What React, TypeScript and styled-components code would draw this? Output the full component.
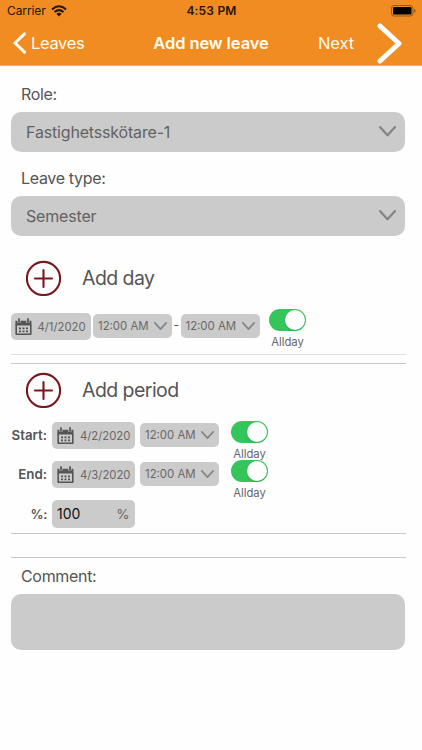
import React from 'react';
import styled, { createGlobalStyle } from 'styled-components';

const GlobalStyle = createGlobalStyle`
  * { box-sizing: border-box; }
  body { margin: 0; background: #fefefe; font-family: Inter, "Liberation Sans", sans-serif; color: #555; }
  svg { display: block; flex: none; }
  button, input, textarea { font-family: inherit; border: 0; padding: 0; margin: 0; outline: 0; }
`;

const Screen = styled.main`
  width: 422px;
  height: 750px;
  overflow: hidden;
  background: #fefefe;
`;

const Header = styled.header`
  height: 66px;
  background: #f18c23;
  border-bottom: 1px solid #f4ad63;
`;

const StatusBar = styled.div`
  height: 22px;
  display: grid;
  grid-template-columns: 1fr auto 1fr;
  align-items: center;
  padding: 0 6px 0 7px;
  color: #25160a;
  font-size: 12px;
  line-height: 22px;
`;

const Carrier = styled.div`
  display: flex;
  align-items: center;
  gap: 5px;
  letter-spacing: -0.1px;
`;

const Clock = styled.div`
  font-weight: 600;
  letter-spacing: 0.2px;
`;

const BatterySlot = styled.div`
  display: flex;
  justify-content: flex-end;
`;

const NavBar = styled.nav`
  height: 42px;
  display: grid;
  grid-template-columns: 1fr auto 1fr;
  align-items: center;
  padding: 0 20px 0 13px;
  color: #fffdf0;
`;

const NavLink = styled.button<{ $end?: boolean }>`
  display: flex;
  align-items: center;
  justify-content: ${p => (p.$end ? 'flex-end' : 'flex-start')};
  gap: ${p => (p.$end ? 23 : 4)}px;
  background: none;
  color: inherit;
  font-size: 16.5px;
  line-height: 20px;
  letter-spacing: ${p => (p.$end ? -0.1 : -0.35)}px;
`;

const NavTitle = styled.h1`
  margin: 0 0 0 7px;
  font-size: 16.5px;
  font-weight: 600;
  line-height: 20px;
  letter-spacing: -0.1px;
`;

const FieldLabel = styled.label<{ $top: number }>`
  display: block;
  margin: ${p => p.$top}px 0 8px 21px;
  height: 20px;
  font-size: 16px;
  line-height: 20px;
  letter-spacing: -0.32px;
`;

const Select = styled.button`
  display: flex;
  align-items: center;
  justify-content: space-between;
  width: 394.7px;
  height: 40px;
  margin-left: 10.5px;
  padding: 0 9.5px 1px 15.5px;
  border-radius: 10px;
  background: #cbcbcb;
  color: #626262;
  font-size: 16px;
  letter-spacing: -0.17px;
`;

const AddRow = styled.div<{ $top: number }>`
  display: flex;
  align-items: center;
  gap: 20px;
  height: 36px;
  margin: ${p => p.$top}px 0 0 25px;
  font-size: 19.5px;
  line-height: 24px;
  letter-spacing: -0.55px;
`;

const DayRow = styled.div`
  display: flex;
  align-items: flex-start;
  height: 44px;
  margin: 13px 16px 0 10.5px;
`;

const PeriodRow = styled.div`
  display: flex;
  align-items: flex-start;
  height: 39px;
`;

const PeriodForm = styled.div`
  margin: 13px 0 0;
  height: 112px;
`;

const RowLabel = styled.span`
  width: 47px;
  margin: 5px 5px 0 0;
  font-size: 13.3px;
  font-weight: 600;
  line-height: 19px;
  text-align: right;
`;

const PercentLabel = styled(RowLabel)`
  margin-top: 6px;
  font-size: 13px;
  letter-spacing: -0.3px;
`;

const DateBox = styled.button<{ $wide?: boolean; $top: number }>`
  display: flex;
  align-items: center;
  gap: 6px;
  width: ${p => (p.$wide ? 82.5 : 80.5)}px;
  height: 27px;
  margin-top: ${p => p.$top}px;
  padding-left: ${p => (p.$wide ? 5 : 4)}px;
  border-radius: 5px;
  background: #cbcbcb;
  color: #686868;
  font-size: 11.3px;
  letter-spacing: 0;
  white-space: nowrap;
`;

const TimeBox = styled.button<{ $left: number; $top: number }>`
  display: flex;
  align-items: center;
  justify-content: space-between;
  width: 79px;
  height: 24px;
  margin: ${p => p.$top}px 0 0 ${p => p.$left}px;
  padding: 0 5px 0 5px;
  border-radius: 5px;
  background: #cbcbcb;
  color: #686868;
  font-size: 11.4px;
  white-space: nowrap;
`;

const Dash = styled.span`
  width: 8.5px;
  margin-top: 8px;
  font-size: 12px;
  line-height: 16px;
  text-align: center;
`;

const ToggleGroup = styled.div<{ $left: number }>`
  display: flex;
  flex-direction: column;
  align-items: center;
  width: 37px;
  margin-left: ${p => p.$left}px;
  font-size: 11.3px;
  line-height: 14px;
  color: #666;
`;

const Track = styled.span`
  display: flex;
  justify-content: flex-end;
  flex: none;
  width: 37px;
  height: 22px;
  margin-bottom: 4px;
  padding: 1px;
  border-radius: 11px;
  background: #34c65a;
  position: relative;
`;

const Knob = styled.span`
  width: 20px;
  height: 20px;
  border-radius: 50%;
  background: #fff;
  box-shadow: 0 1px 2px rgba(0, 0, 0, 0.18);
`;

const PercentBox = styled.div`
  display: flex;
  align-items: center;
  justify-content: space-between;
  width: 82.5px;
  height: 28px;
  margin-top: 1px;
  padding: 0 5px;
  border-radius: 5px;
  background: #cbcbcb;
  color: #686868;
  font-size: 13.5px;
`;

const PercentInput = styled.input`
  width: 50px;
  background: transparent;
  color: #111;
  font-size: 14px;
  line-height: 18px;
`;

const Rule = styled.hr<{ $top?: number; $light?: boolean }>`
  height: 1px;
  margin: ${p => p.$top || 0}px 16.5px 0 10.5px;
  border: 0;
  background: ${p => (p.$light ? '#e0e0e0' : '#c8c8c8')};
`;

const Comment = styled.textarea`
  display: block;
  width: 394.7px;
  height: 56px;
  margin-left: 10.5px;
  padding: 10px 15px;
  border-radius: 10px;
  background: #cbcbcb;
  resize: none;
`;

const Chevron = ({ w, h, stroke, color = '#858585' }: { w: number; h: number; stroke: number; color?: string }) => (
  <svg width={w} height={h} viewBox={`0 0 ${w} ${h}`} fill="none" stroke={color} strokeWidth={stroke} strokeLinecap="round" strokeLinejoin="round">
    <path d={`M${stroke / 2} ${stroke / 2}L${w / 2} ${h - stroke / 2}L${w - stroke / 2} ${stroke / 2}`} />
  </svg>
);

const Wifi = () => (
  <svg width="16" height="12" viewBox="0 0 16 12" fill="none" stroke="#25160a" strokeWidth="2">
    <path d="M1 4.4Q8-1.8 15 4.4M3.5 7Q8 3.2 12.5 7" />
    <path d="M5.4 8.8Q8 6.8 10.6 8.8L8 11.5Z" fill="#25160a" stroke="none" />
  </svg>
);

const Battery = () => (
  <svg width="25" height="12" viewBox="0 0 25 12">
    <rect x="0.5" y="0.5" width="21.5" height="10.5" rx="2.8" fill="none" stroke="#8c5722" />
    <rect x="2" y="2" width="18.5" height="7.5" rx="1.3" fill="#000" />
    <path d="M23.3 4v3.8q1.2-.5 1.2-1.9T23.3 4" fill="#77491c" />
  </svg>
);

const PlusCircle = () => (
  <svg width="37" height="36" viewBox="0 0 37 36" fill="none" stroke="#78191f" strokeWidth="2.1" strokeLinecap="round">
    <circle cx="18.5" cy="18.5" r="16.6" />
    <path d="M18.5 10v17M10 18.5h17" />
  </svg>
);

const Calendar = () => (
  <svg width="17" height="18" viewBox="0 0 17 18" fill="none" stroke="#555">
    <path d="M1.2 6.5v9.7h14.6V6.5" strokeWidth="1.6" strokeLinejoin="round" />
    <path d="M.4 2.8h2v2h3.1v-2h5.8v2h3.1v-2h2v4.8H.4Z" fill="#555" stroke="none" />
    <path d="M4 .9v3M13 .9v3" strokeWidth="1.7" strokeLinecap="round" />
    <path d="M4 10.3h2M7.5 10.3h2M11 10.3h2M4 13.3h2M7.5 13.3h2M11 13.3h2" strokeWidth="1.8" />
  </svg>
);

const Time = ({ left, top }: { left: number; top: number }) => (
  <TimeBox $left={left} $top={top}>
    12:00 AM <Chevron w={13} h={8} stroke={1.7} />
  </TimeBox>
);

const AllDay = ({ left }: { left: number }) => (
  <ToggleGroup $left={left}>
    <Track role="switch" aria-checked="true"><Knob /></Track>
    Allday
  </ToggleGroup>
);

const Period = ({ label, date }: { label: string; date: string }) => (
  <PeriodRow>
    <RowLabel>{label}</RowLabel>
    <DateBox $wide $top={1}><Calendar />{date}</DateBox>
    <Time left={5.5} top={2} />
    <AllDay left={12} />
  </PeriodRow>
);

export default function App() {
  return (
    <Screen>
      <GlobalStyle />
      <Header>
        <StatusBar>
          <Carrier>Carrier <Wifi /></Carrier>
          <Clock>4:53 PM</Clock>
          <BatterySlot><Battery /></BatterySlot>
        </StatusBar>
        <NavBar>
          <NavLink>
            <svg width="14" height="22" viewBox="0 0 14 22" fill="none" stroke="#fffdf0" strokeWidth="3" strokeLinecap="round" strokeLinejoin="round"><path d="M11.5 1.8 2 11l9.5 9.2" /></svg>
            Leaves
          </NavLink>
          <NavTitle>Add new leave</NavTitle>
          <NavLink $end>
            Next
            <svg width="25" height="41" viewBox="0 0 25 41" fill="none" stroke="#fff" strokeWidth="5" strokeLinecap="round" strokeLinejoin="round"><path d="M3 3l19 17.5L3 38" /></svg>
          </NavLink>
        </NavBar>
      </Header>

      <FieldLabel $top={18}>Role:</FieldLabel>
      <Select>Fastighetsskötare-1 <Chevron w={17} h={10.5} stroke={2.3} /></Select>
      <FieldLabel $top={16}>Leave type:</FieldLabel>
      <Select>Semester <Chevron w={17} h={10.5} stroke={2.3} /></Select>

      <AddRow $top={24}><PlusCircle />Add day</AddRow>
      <DayRow>
        <DateBox $top={4}><Calendar />4/1/2020</DateBox>
        <Time left={2} top={5} />
        <Dash>-</Dash>
        <Time left={0} top={5} />
        <AllDay left={9.5} />
      </DayRow>
      <Rule $light $top={1} />
      <Rule $top={8} />

      <AddRow $top={8}><PlusCircle />Add period</AddRow>
      <PeriodForm>
        <Period label="Start:" date="4/2/2020" />
        <Period label="End:" date="4/3/2020" />
        <PeriodRow>
          <PercentLabel>%:</PercentLabel>
          <PercentBox><PercentInput defaultValue="100" aria-label="Percent" />%</PercentBox>
        </PeriodRow>
      </PeriodForm>
      <Rule />
      <Rule $top={23} />

      <FieldLabel $top={8}>Comment:</FieldLabel>
      <Comment aria-label="Comment" />
    </Screen>
  );
}
